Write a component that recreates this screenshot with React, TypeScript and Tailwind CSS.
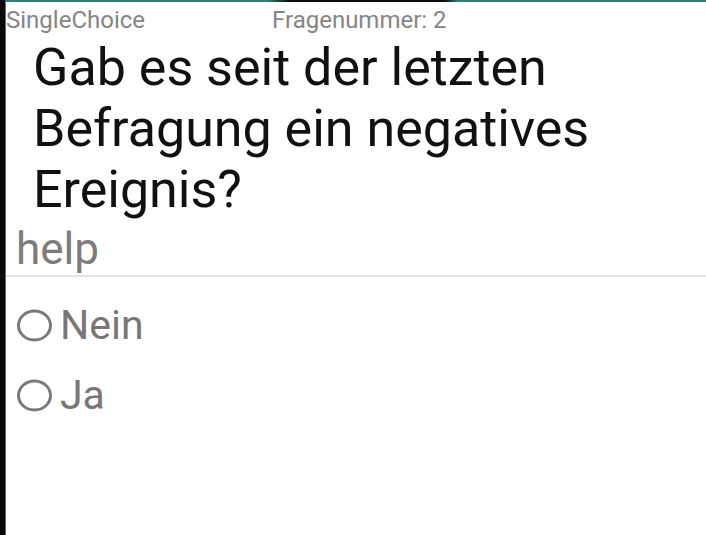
import React from 'react';

const choices = ['Nein', 'Ja'];

function RadioCircle() {
  return (
    <svg width="37" height="33" viewBox="0 0 37 33" className="shrink-0">
      <ellipse cx="18.5" cy="16.5" rx="16" ry="14.5" fill="none" stroke="#7a7a7a" strokeWidth="3" />
    </svg>
  );
}

export default function App() {
  return (
    <div
      className="w-[706px] h-[535px] flex bg-white overflow-hidden"
      style={{ fontFamily: 'Roboto, "Noto Sans", sans-serif' }}
    >
      {/* Left window edge */}
      <div className="w-[5px] bg-[#0a0a0a] shrink-0" />
      <div className="w-[1px] bg-[#6a6a6a] shrink-0" />

      <div className="flex-1 flex flex-col">
        {/* Status strip */}
        <div className="h-[2px] bg-[linear-gradient(90deg,#2a8073_0px,#2a8073_262px,#0c0c0c_284px,#0c0c0c_438px,#2a8073_452px)]" />

        {/* Header */}
        <div className="flex pt-[4px] text-[24px] leading-[28px] text-[#858585]">
          <span className="w-[266px]">SingleChoice</span>
          <span>Fragenummer: 2</span>
        </div>

        {/* Question */}
        <h1 className="mt-[3px] pl-[27px] pr-4 text-[52px] leading-[61px] text-[#111] font-normal">
          Gab es seit der letzten Befragung ein negatives Ereignis?
        </h1>

        <div className="mt-[4px] pl-[10px] text-[44px] leading-[50px] text-[#7c7c7c]">help</div>

        <div className="mt-[1px] h-[2px] bg-[#e4e4e4]" />

        {/* Choices */}
        <div className="mt-[13px] flex flex-col">
          {choices.map((c) => (
            <label key={c} className="h-[70px] flex items-center gap-[7px] pl-[10px]">
              <RadioCircle />
              <span className="text-[41px] leading-[70px] text-[#777]">{c}</span>
            </label>
          ))}
        </div>
      </div>
    </div>
  );
}
